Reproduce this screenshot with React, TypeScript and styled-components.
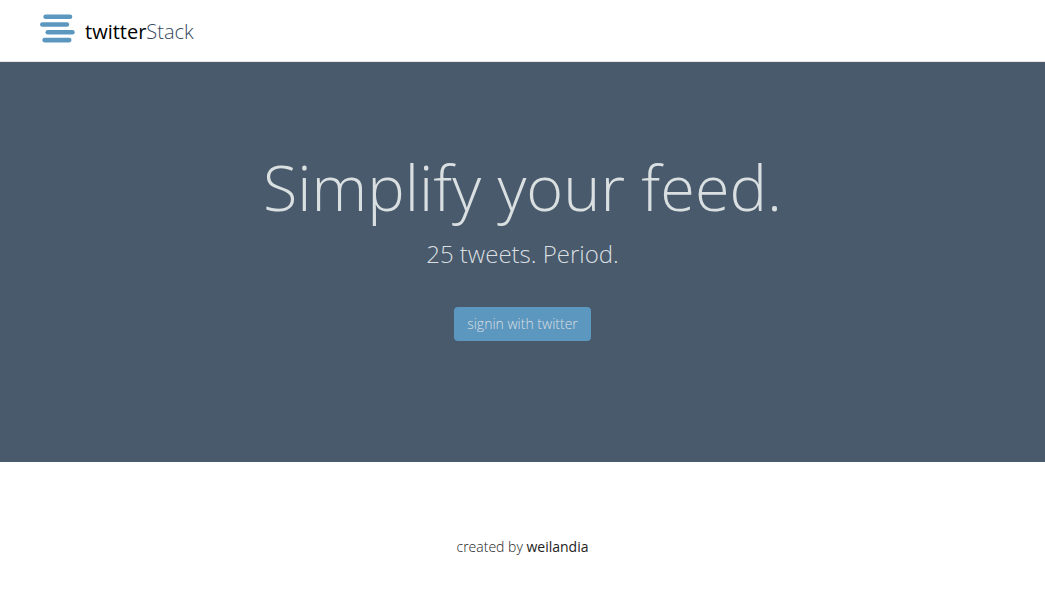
import React from "react";
import styled, { createGlobalStyle } from "styled-components";

const GlobalStyle = createGlobalStyle`
  *, *::before, *::after { box-sizing: border-box; }
  body {
    margin: 0;
    background: #fff;
    color: #222;
    font-family: "Open Sans", sans-serif;
    font-size: 14px;
    font-weight: 300;
    line-height: 20px;
  }
`;

const Header = styled.header`
  display: flex;
  align-items: flex-start;
  padding: 13px 40px 10px;
  border-bottom: 1px solid #e7e7e7;
`;

const Brand = styled.a`
  display: flex;
  align-items: flex-start;
  gap: 10px;
  color: #34495e;
  font-size: 20px;
  line-height: 38px;
  text-decoration: none;
`;

const BrandStrong = styled.span`
  color: #000;
  font-weight: 400;
`;

const Logo = styled.svg`
  display: block;
  width: 35px;
  height: 30px;
`;

const Hero = styled.main`
  display: flex;
  flex-direction: column;
  align-items: center;
  min-height: 400px;
  padding: 80px 20px;
  background: #485a6b;
  color: #dadfe1;
  text-align: center;
`;

const Title = styled.h1`
  margin: 0;
  font-size: 63px;
  font-weight: 300;
  line-height: 90px;
`;

const Tagline = styled.p`
  margin: 4px 0 35px;
  font-size: 24px;
  line-height: 36px;
`;

const SignInButton = styled.button`
  padding: 7px 13px;
  border: 0;
  border-radius: 4px;
  background: #5c97bf;
  color: #dadfe1;
  font: inherit;
  cursor: pointer;
`;

const Footer = styled.footer`
  padding: 75px 20px 40px;
  text-align: center;
`;

const AuthorLink = styled.a`
  color: #222;
  font-weight: 400;
  text-decoration: none;
`;

export default function App() {
  return (
    <>
      <GlobalStyle />
      <Header>
        <Brand href="#">
          <Logo viewBox="0 0 35 30" aria-hidden="true" fill="#5c97bf">
            <rect x="3.3" y="1.5" width="29" height="4.6" rx="2.3" />
            <rect x="0" y="9.2" width="29.2" height="4.6" rx="2.3" />
            <rect x="5.5" y="17" width="29.2" height="4.6" rx="2.3" />
            <rect x="2.3" y="24.8" width="29.2" height="4.6" rx="2.3" />
          </Logo>
          <span>
            <BrandStrong>twitter</BrandStrong>Stack
          </span>
        </Brand>
      </Header>
      <Hero>
        <Title>Simplify your feed.</Title>
        <Tagline>25 tweets. Period.</Tagline>
        <SignInButton type="button">signin with twitter</SignInButton>
      </Hero>
      <Footer>
        created by <AuthorLink href="#">weilandia</AuthorLink>
      </Footer>
    </>
  );
}
